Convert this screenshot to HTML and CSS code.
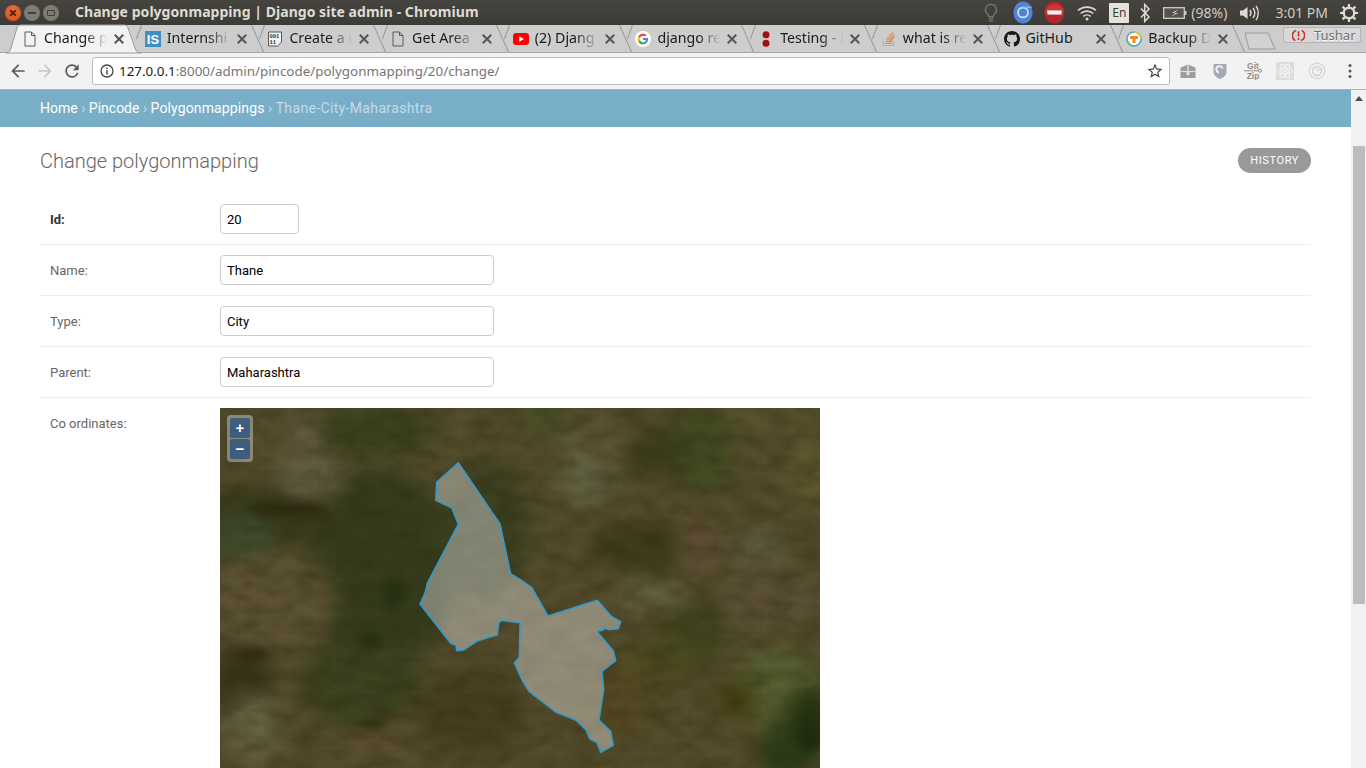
FILE: index.html
```html
<!DOCTYPE html>
<html lang="en">
<head>
<meta charset="utf-8">
<title>Change polygonmapping | Django site admin - Chromium</title>
<link rel="stylesheet" href="styles.css">
</head>
<body>
<div class="window">

  <header class="titlebar">
    <div class="winbtns">
      <span class="winbtn close-btn"></span>
      <span class="winbtn min-btn"></span>
      <span class="winbtn max-btn"></span>
    </div>
    <div class="wintitle">Change polygonmapping | Django site admin - Chromium</div>
    <div class="tray">
      <svg class="tray-bulb" viewBox="0 0 16 22"><path d="M8 1.5a6 6 0 0 0-3.5 10.9c.8.7 1 1.6 1 2.6h5c0-1 .2-1.9 1-2.6A6 6 0 0 0 8 1.5z" fill="none" stroke="#77766f" stroke-width="1.6"/><path d="M5.5 17h5M6 19.5h4" stroke="#77766f" stroke-width="1.6"/></svg>
      <svg class="tray-chrome" viewBox="0 0 20 24"><ellipse cx="10" cy="12" rx="10" ry="11.5" fill="#4d86d8"/><circle cx="10" cy="12" r="5.2" fill="none" stroke="#cfe0f5" stroke-width="1.8"/><path d="M10 6.5h9" stroke="#8fb4e8" stroke-width="1.5"/></svg>
      <svg class="tray-stop" viewBox="0 0 22 24"><ellipse cx="11" cy="12" rx="10.5" ry="11.5" fill="#b5272d"/><path d="M.8 12a10.500 11.500 0 0 1 20.400 0z" fill="#c9383a"/><rect x="3.500" y="9.800" width="15" height="4.400" fill="#f4eeee"/></svg>
      <svg class="tray-wifi" viewBox="0 0 20 16"><path d="M1 5.500c5-4.500 13-4.500 18 0M3.700 8.500c3.500-3.200 9.100-3.200 12.600 0M6.400 11.300c2-1.800 5.200-1.800 7.200 0" fill="none" stroke="#dedbd3" stroke-width="1.600"/><circle cx="10" cy="14" r="1.500" fill="#dedbd3"/></svg>
      <span class="tray-lang">En</span>
      <svg class="tray-bt" viewBox="0 0 12 20"><path d="M2 5.500l8 8.500-4.300 4.500V1.500L10 6l-8 8.500" fill="none" stroke="#dedbd3" stroke-width="1.500"/></svg>
      <svg class="tray-bat" viewBox="0 0 24 12"><rect x=".7" y=".7" width="20.600" height="10.600" fill="#55534d" stroke="#cfccc4" stroke-width="1.300"/><rect x="21.500" y="4" width="2" height="4" fill="#cfccc4"/><path d="M15 2.500L9 6h3.500L8 9.500 15 6h-3.500z" fill="#dedbd3"/></svg>
      <span class="tray-text tray-pct">(98%)</span>
      <svg class="tray-vol" viewBox="0 0 20 16"><path d="M1 5.500h3L8.500 2v12L4 10.500H1z" fill="#dedbd3"/><path d="M11 5c1.200 1.800 1.200 4.200 0 6M14 3c2.200 3 2.200 7 0 10M17 1c3 4 3 10 0 14" fill="none" stroke="#dedbd3" stroke-width="1.400"/></svg>
      <span class="tray-text tray-time">3:01 PM</span>
      <svg class="tray-gear" viewBox="0 0 18 18"><circle cx="9" cy="9" r="5.300" fill="none" stroke="#dedbd3" stroke-width="2.400"/><path d="M9 0v4M9 14v4M0 9h4M14 9h4M2.600 2.600l2.800 2.800M12.600 12.600l2.800 2.800M15.400 2.600l-2.800 2.800M5.400 12.600l-2.800 2.800" stroke="#dedbd3" stroke-width="2.200"/></svg>
    </div>
  </header>

  <nav class="tabstrip">
    <div class="tab active">
      <svg class="active-shape" viewBox="0 0 140 28"><path d="M1.500 28C4 28 5 26 6 23L12 3c.5-2 1.500-3 3.500-3h104c2 0 3 1 3.500 3l7 20c1 3 2.500 5 6 5z" fill="#f2f2f2" stroke="#9a9a9a"/></svg>
      <svg class="favicon" viewBox="0 0 16 16"><path d="M3 1h6.500L13 4.500V15H3z M9.500 1v3.500H13" fill="none" stroke="#5a5a5a" stroke-width="1"/></svg>
      <span class="tab-title">Change p</span><span class="close"></span>
    </div>
    <div class="tab">
      <svg class="favicon" viewBox="0 0 16 16"><rect width="16" height="16" fill="#3d8fc4"/><text x="8" y="13" class="fav-is">IS</text></svg>
      <span class="tab-title">Internshi</span><span class="close"></span>
    </div>
    <div class="tab">
      <svg class="favicon" viewBox="0 0 16 16"><path d="M1.500 1h13v10l-4 4h-9z" fill="#f4f4f4" stroke="#555"/><text x="2.500" y="6.500" class="fav-bin">001</text><text x="2.500" y="12.500" class="fav-bin">11</text></svg>
      <span class="tab-title">Create a r</span><span class="close"></span>
    </div>
    <div class="tab">
      <svg class="favicon" viewBox="0 0 16 16"><path d="M3 1h6.500L13 4.500V15H3z M9.500 1v3.500H13" fill="none" stroke="#5a5a5a" stroke-width="1"/></svg>
      <span class="tab-title">Get Area</span><span class="close"></span>
    </div>
    <div class="tab">
      <svg class="favicon" viewBox="0 0 16 16"><rect y="2" width="16" height="12" rx="3" fill="#f00"/><path d="M6.300 5.200v5.600L11 8z" fill="#fff"/></svg>
      <span class="tab-title">(2) Djang</span><span class="close"></span>
    </div>
    <div class="tab">
      <svg class="favicon" viewBox="0 0 48 48"><circle cx="24" cy="24" r="24" fill="#fff"/><g transform="translate(8 8) scale(.667)"><path fill="#EA4335" d="M24 9.500c3.540 0 6.710 1.220 9.210 3.600l6.850-6.850C35.900 2.380 30.470 0 24 0 14.620 0 6.510 5.380 2.560 13.220l7.980 6.190C12.430 13.720 17.740 9.500 24 9.500z"/><path fill="#4285F4" d="M46.980 24.550c0-1.570-.15-3.090-.38-4.550H24v9.020h12.940c-.58 2.960-2.260 5.480-4.780 7.180l7.730 6c4.510-4.180 7.090-10.360 7.090-17.650z"/><path fill="#FBBC05" d="M10.530 28.590c-.48-1.450-.76-2.990-.76-4.590s.27-3.140.76-4.590l-7.980-6.190C.92 16.460 0 20.120 0 24c0 3.880.92 7.540 2.560 10.780l7.970-6.190z"/><path fill="#34A853" d="M24 48c6.480 0 11.930-2.130 15.890-5.810l-7.730-6c-2.150 1.450-4.920 2.300-8.160 2.300-6.260 0-11.570-4.220-13.470-9.910l-7.980 6.190C6.510 42.620 14.620 48 24 48z"/></g></svg>
      <span class="tab-title">django re</span><span class="close"></span>
    </div>
    <div class="tab">
      <svg class="favicon" viewBox="0 0 16 16"><circle cx="8" cy="3.800" r="3.500" fill="#a50f12"/><circle cx="8" cy="12.200" r="3.500" fill="#a50f12"/></svg>
      <span class="tab-title">Testing - l</span><span class="close"></span>
    </div>
    <div class="tab">
      <svg class="favicon" viewBox="0 0 16 16"><path d="M2.500 10v4.500h10V10" fill="none" stroke="#b5b0a8" stroke-width="1.200"/><path d="M4.500 12.500h6M4.700 10.300l6 .6M5.300 8l5.800 1.600M6.500 5.500l5.200 3M8.500 3.200l4 4.400M11 1.500l2.400 5.300" stroke="#ef8236" stroke-width="1.200"/></svg>
      <span class="tab-title">what is re</span><span class="close"></span>
    </div>
    <div class="tab">
      <svg class="favicon" viewBox="0 0 16 16"><path fill="#161614" d="M8 0C3.580 0 0 3.580 0 8c0 3.540 2.290 6.530 5.470 7.590.4.070.55-.17.55-.38 0-.19-.01-.82-.01-1.490-2.010.37-2.530-.49-2.690-.94-.09-.23-.48-.94-.82-1.130-.28-.15-.68-.52-.01-.53.63-.01 1.080.58 1.230.82.720 1.210 1.870.87 2.330.66.070-.52.28-.87.51-1.070-1.780-.2-3.640-.89-3.640-3.950 0-.87.31-1.590.82-2.150-.08-.2-.36-1.020.08-2.120 0 0 .67-.21 2.200.82.64-.18 1.320-.27 2-.27.68 0 1.360.09 2 .27 1.530-1.040 2.200-.82 2.200-.82.44 1.100.16 1.920.08 2.120.51.56.82 1.270.82 2.150 0 3.070-1.870 3.750-3.650 3.950.29.25.54.73.54 1.480 0 1.070-.01 1.930-.01 2.200 0 .21.15.46.55.38A8.013 8.013 0 0 0 16 8c0-4.420-3.580-8-8-8z"/></svg>
      <span class="tab-title full">GitHub</span><span class="close"></span>
    </div>
    <div class="tab">
      <svg class="favicon" viewBox="0 0 16 16"><circle cx="8" cy="8" r="7" fill="#fff" stroke="#4aa8d8" stroke-width="1.600"/><path d="M8 1a7 7 0 0 1 7 7" fill="none" stroke="#e6c32e" stroke-width="1.600"/><path d="M1 8a7 7 0 0 0 7 7" fill="none" stroke="#62bb6a" stroke-width="1.600"/><path d="M4 5h8v3H9.500v4h-3V8H4z" fill="#ef8a2e"/></svg>
      <span class="tab-title">Backup D</span><span class="close"></span>
    </div>
    <svg class="newtab" viewBox="0 0 32 18"><path d="M1 1h23l7 16H5z" fill="#d2d2d2" stroke="#9a9a9a"/></svg>
    <div class="profile">
      <svg class="profile-icon" viewBox="0 0 14 14"><path d="M4.500 1.500a6 6 0 0 0-1 11M9.500 12.500a6 6 0 0 0 1-11" fill="none" stroke="#c9312b" stroke-width="1.700"/><path d="M7 2.500v5.500M7 9.800v2" stroke="#c9312b" stroke-width="1.700"/></svg>
      <span>Tushar</span>
    </div>
  </nav>

  <div class="toolbar">
    <svg class="nav-icon" viewBox="0 0 24 24"><path fill="#5a5a5a" d="M20 11H7.830l5.590-5.590L12 4l-8 8 8 8 1.410-1.410L7.830 13H20v-2z"/></svg>
    <svg class="nav-icon" viewBox="0 0 24 24"><path fill="#c8c8c8" d="M4 11h12.170l-5.590-5.590L12 4l8 8-8 8-1.410-1.410L16.170 13H4v-2z"/></svg>
    <svg class="nav-icon" viewBox="0 0 24 24"><path fill="#5a5a5a" d="M17.650 6.350A7.960 7.960 0 0 0 12 4c-4.420 0-7.990 3.580-7.990 8s3.570 8 7.990 8c3.730 0 6.840-2.550 7.730-6h-2.080A5.990 5.990 0 0 1 12 18c-3.310 0-6-2.690-6-6s2.690-6 6-6c1.660 0 3.140.69 4.220 1.780L13 11h7V4l-2.350 2.350z"/></svg>
    <div class="omnibox">
      <svg class="info" viewBox="0 0 14 14"><circle cx="7" cy="7" r="6" fill="none" stroke="#444" stroke-width="1.300"/><path d="M7 6v4.500M7 3.500v1.500" stroke="#444" stroke-width="1.400"/></svg>
      <span class="url"><span class="host">127.0.0.1</span>:8000/admin/pincode/polygonmapping/20/change/</span>
      <svg class="star" viewBox="0 0 24 24"><path fill="#444" d="M22 9.240l-7.190-.62L12 2 9.190 8.630 2 9.240l5.460 4.730L5.820 21 12 17.270 18.180 21l-1.630-7.030L22 9.240zM12 15.400l-3.760 2.270 1-4.280-3.320-2.880 4.380-.38L12 6.100l1.710 4.040 4.380.38-3.320 2.880 1 4.280L12 15.400z"/></svg>
    </div>
    <div class="exts">
      <svg class="ext" viewBox="0 0 18 18"><path d="M1.500 5.500L9 2.500l7.500 3V16h-15z" fill="#9c9c9c"/><path d="M1.500 9.500h15M9 2.500V13" stroke="#e4e4e4" stroke-width="1.200"/><path d="M6.500 10.500L9 14l2.500-3.500z" fill="#e4e4e4"/></svg>
      <svg class="ext" viewBox="0 0 18 18"><path d="M2.500 2h13v8c0 3-3 5.500-6.500 7-3.500-1.500-6.500-4-6.500-7z" fill="#a4a9b6"/><path d="M11.500 6.500A3.200 3.200 0 1 0 8 10.500" fill="none" stroke="#f2f2f2" stroke-width="1.800"/></svg>
      <svg class="ext ext-wide" viewBox="0 0 20 18"><text x="10" y="6.800" class="gz">Git</text><path d="M1 8.800h15" stroke="#8d8d8d"/><circle cx="17" cy="8.800" r="1.500" fill="none" stroke="#8d8d8d"/><text x="10" y="17" class="gz">Zip</text></svg>
      <svg class="ext" viewBox="0 0 18 18"><rect width="18" height="18" fill="#dcdcdc"/><g fill="none" stroke="#f4f4f4" stroke-width="1"><ellipse cx="9" cy="9" rx="7.500" ry="3"/><ellipse cx="9" cy="9" rx="7.500" ry="3" transform="rotate(60 9 9)"/><ellipse cx="9" cy="9" rx="7.500" ry="3" transform="rotate(120 9 9)"/></g><circle cx="9" cy="9" r="1.500" fill="#f4f4f4"/></svg>
      <svg class="ext" viewBox="0 0 18 18"><circle cx="9" cy="9" r="7.800" fill="none" stroke="#d8d8d8" stroke-width="1.400"/><circle cx="9" cy="9" r="4.500" fill="none" stroke="#d0d0d0" stroke-width="1.400"/><circle cx="10" cy="8" r="1.400" fill="#d8d8d8"/></svg>
      <svg class="ext ext-dots" viewBox="0 0 4 16"><circle cx="2" cy="2.500" r="1.500" fill="#555"/><circle cx="2" cy="8" r="1.500" fill="#555"/><circle cx="2" cy="13.500" r="1.500" fill="#555"/></svg>
    </div>
  </div>

  <div class="viewport">
    <main class="page">
      <div class="breadcrumbs"><a>Home</a> › <a>Pincode</a> › <a class="crumb-model">Polygonmappings</a> › <span class="crumb-last">Thane-City-Maharashtra</span></div>
      <div class="content">
        <div class="head">
          <h1>Change polygonmapping</h1>
          <a class="history">HISTORY</a>
        </div>
        <form>
          <div class="row">
            <label class="required" for="f-id">Id:</label>
            <input class="field short" id="f-id" type="text" value="20">
          </div>
          <div class="row">
            <label for="f-name">Name:</label>
            <input class="field" id="f-name" type="text" value="Thane">
          </div>
          <div class="row">
            <label for="f-type">Type:</label>
            <input class="field" id="f-type" type="text" value="City">
          </div>
          <div class="row">
            <label for="f-parent">Parent:</label>
            <input class="field" id="f-parent" type="text" value="Maharashtra">
          </div>
          <div class="row row-map">
            <label>Co ordinates:</label>
            <div class="map">
              <svg class="map-svg" viewBox="0 0 600 400">
                <defs>
                  <filter id="soft" x="-10%" y="-10%" width="120%" height="120%" color-interpolation-filters="sRGB"><feGaussianBlur stdDeviation="10"/></filter>
                  <filter id="softer" x="-10%" y="-10%" width="120%" height="120%" color-interpolation-filters="sRGB"><feGaussianBlur stdDeviation="5"/></filter>
                  <filter id="noise" color-interpolation-filters="sRGB"><feTurbulence type="fractalNoise" baseFrequency=".04 .08" numOctaves="3" seed="7"/><feColorMatrix values="0 0 0 0 .17  0 0 0 0 .16  0 0 0 0 .05  1.800 0 0 0 -.6"/><feGaussianBlur stdDeviation="1.500"/></filter>
                  <pattern id="grid" width="9" height="7" patternUnits="userSpaceOnUse"><path d="M0 0h9M0 0v7" stroke="#000" stroke-opacity=".035" stroke-width="1"/></pattern>
                </defs>
                <rect width="600" height="400" fill="#554d2d"/>
                <g filter="url(#soft)">
                  <ellipse cx="150" cy="22" rx="65" ry="24" fill="#39421e"/>
                  <ellipse cx="160" cy="160" rx="75" ry="100" fill="#353d1e"/>
                  <ellipse cx="140" cy="275" rx="60" ry="45" fill="#3b4320"/>
                  <ellipse cx="50" cy="105" rx="70" ry="30" fill="#38391a"/>
                  <ellipse cx="23" cy="125" rx="30" ry="28" fill="#3d4a2d"/>
                  <ellipse cx="57" cy="192" rx="60" ry="50" fill="#5e5334"/>
                  <ellipse cx="83" cy="35" rx="22" ry="30" fill="#635a3e"/>
                  <ellipse cx="87" cy="72" rx="36" ry="20" fill="#646046"/>
                  <ellipse cx="20" cy="275" rx="32" ry="32" fill="#39351b"/>
                  <ellipse cx="33" cy="320" rx="30" ry="34" fill="#666242"/>
                  <ellipse cx="163" cy="335" rx="40" ry="22" fill="#5c5030"/>
                  <ellipse cx="250" cy="305" rx="55" ry="45" fill="#47401f"/>
                  <ellipse cx="265" cy="120" rx="45" ry="70" fill="#3d4221"/>
                  <ellipse cx="367" cy="60" rx="30" ry="40" fill="#626242"/>
                  <ellipse cx="380" cy="32" rx="25" ry="20" fill="#5f5436"/>
                  <ellipse cx="323" cy="10" rx="30" ry="14" fill="#465027"/>
                  <ellipse cx="480" cy="42" rx="34" ry="42" fill="#414b22"/>
                  <ellipse cx="435" cy="45" rx="26" ry="28" fill="#3e3e1b"/>
                  <ellipse cx="423" cy="139" rx="55" ry="26" fill="#3f3d1a"/>
                  <ellipse cx="430" cy="186" rx="34" ry="15" fill="#666340"/>
                  <ellipse cx="480" cy="139" rx="24" ry="30" fill="#5f4d35"/>
                  <ellipse cx="540" cy="142" rx="26" ry="20" fill="#5e5a40"/>
                  <ellipse cx="550" cy="192" rx="50" ry="28" fill="#5d5137"/>
                  <ellipse cx="557" cy="280" rx="42" ry="40" fill="#566032"/>
                  <ellipse cx="517" cy="290" rx="20" ry="18" fill="#46420f"/>
                  <ellipse cx="590" cy="312" rx="26" ry="30" fill="#24330f"/>
                  <ellipse cx="567" cy="345" rx="30" ry="28" fill="#2b3d18"/>
                  <ellipse cx="590" cy="65" rx="22" ry="30" fill="#5f592e"/>
                  <ellipse cx="557" cy="12" rx="50" ry="18" fill="#5a5430"/>
                  <ellipse cx="473" cy="225" rx="35" ry="28" fill="#41461f"/>
                  <ellipse cx="440" cy="255" rx="32" ry="26" fill="#4d4a20"/>
                  <ellipse cx="395" cy="295" rx="40" ry="40" fill="#574a25"/>
                </g>
                <g filter="url(#softer)">
                  <ellipse cx="67" cy="101" rx="40" ry="6" fill="#2b2710"/>
                  <ellipse cx="173" cy="185" rx="12" ry="14" fill="#283214"/>
                  <ellipse cx="150" cy="232" rx="12" ry="10" fill="#283212"/>
                  <ellipse cx="33" cy="247" rx="18" ry="7" fill="#2e2b12"/>
                  <ellipse cx="153" cy="316" rx="14" ry="5" fill="#302e12"/>
                  <ellipse cx="590" cy="330" rx="14" ry="14" fill="#1e2d10"/>
                </g>
                <rect width="600" height="400" filter="url(#noise)" opacity=".45"/>
                <rect width="600" height="400" fill="url(#grid)"/>
                <polygon class="shape" points="238.300,54.700 280,116 290.700,166 300,171.300 311.700,179.300 328,208 377.300,192.300 391.700,208.700 400.700,213.700 398.300,220.700 388.300,221.700 386,220.300 380.700,222.700 377.700,222 378.300,225 393.300,242.700 395.700,252.700 382,263.300 383.700,282 379,312 390.700,323.300 393.300,337.300 380.700,344.300 376.700,334.300 370,331.300 366,322 355.700,312 335.700,304 309,283.300 301.700,271.300 294.300,254.700 299.300,249.300 300,216 300,214.700 281.700,212.300 279,214.700 277.300,226.700 257.700,232.700 244,242 236.700,242.700 236,237.300 230.700,235.300 200,196 205,185.300 207.300,175.300 238.300,116.300 231.700,99.700 215.700,92.300 216.700,74.300"/>
              </svg>
              <div class="zoombox">
                <button type="button" class="zoombtn">+</button>
                <button type="button" class="zoombtn">−</button>
              </div>
            </div>
          </div>
        </form>
      </div>
    </main>
    <aside class="scrollbar">
      <span class="arrow"></span>
      <span class="thumb"></span>
    </aside>
  </div>
</div>
</body>
</html>
```
FILE: styles.css
```css
* { box-sizing: border-box; }
html, body { margin: 0; height: 100%; overflow: hidden; }
body { background: #fff; font-family: Roboto, sans-serif; }

.window { width: 1366px; height: 768px; display: flex; flex-direction: column; overflow: hidden; }

/* Title bar */
.titlebar {
  height: 25px; flex: none; display: flex; align-items: center;
  background: linear-gradient(#45443f, #3c3b37);
  color: #dfdbd2;
  font-family: "Noto Sans", sans-serif;
}
.winbtns { display: flex; gap: 3px; padding-left: 5px; width: 75px; }
.winbtn { width: 16px; height: 16px; border-radius: 50%; position: relative; }
.close-btn { background: radial-gradient(circle at 50% 40%, #f0743c, #d2481d); }
.close-btn::before { content: ""; position: absolute; left: 4px; right: 4px; top: 7px; height: 2px; background: #5a2410; transform: rotate(45deg); }
.close-btn::after { content: ""; position: absolute; left: 4px; right: 4px; top: 7px; height: 2px; background: #5a2410; transform: rotate(-45deg); }
.min-btn, .max-btn { background: #7d7b73; }
.min-btn::before { content: ""; position: absolute; left: 4px; right: 4px; top: 7px; height: 2px; background: #3f3e39; }
.max-btn::before { content: ""; position: absolute; left: 4px; right: 4px; top: 5px; bottom: 5px; border: 1px solid #3f3e39; border-radius: 1px; }
.wintitle { font-size: 14px; font-weight: 700; white-space: nowrap; letter-spacing: .04px; padding-bottom: 2px; }

.tray { margin-left: auto; display: flex; align-items: center; gap: 12px; padding-right: 8px; }
.tray svg { display: block; flex: none; }
.tray-bulb { width: 16px; height: 20px; }
.tray-chrome { width: 20px; height: 23px; margin-left: 2px; }
.tray-stop { width: 21px; height: 23px; margin-left: -1px; }
.tray-wifi { width: 20px; height: 16px; }
.tray-lang { width: 20px; height: 20px; background: #e6e2da; color: #3c3b37; font-size: 12px; line-height: 20px; text-align: center; border-radius: 1px; }
.tray-bt { width: 12px; height: 20px; margin-left: -2px; }
.tray-bat { width: 24px; height: 12px; }
.tray-text { font-size: 14px; color: #cfccc4; white-space: nowrap; padding-bottom: 1px; }
.tray-pct { margin-left: -8px; }
.tray-vol { width: 20px; height: 16px; }
.tray-time { margin-left: 4px; }
.tray-gear { width: 18px; height: 18px; }

/* Tabs */
.tabstrip {
  height: 28px; flex: none; display: flex; align-items: flex-start; padding-left: 5px;
  background: #cdcdcd; border-bottom: 1px solid #a4a4a4;
  font-family: "Noto Sans", sans-serif;
}
.tab {
  position: relative; flex: none; width: 122.7px; height: 27px;
  display: flex; align-items: center; padding-left: 17px; color: #1a1a1a; font-size: 14.2px;
}
.tab::after {
  content: ""; position: absolute; left: 123px; top: 0; width: 1px; height: 27px;
  background: #949494; transform-origin: top; transform: skewX(24deg);
}
.tab::before {
  content: ""; position: absolute; left: 13.5px; top: 0; width: 1px; height: 14px;
  background: #949494; transform-origin: top; transform: skewX(-20deg);
}
.tab.active::before, .tab.active::after { display: none; }
.tab.active { z-index: 2; }
.active-shape { position: absolute; left: 0; top: 0; width: 140px; height: 28px; overflow: visible; }
.favicon { width: 16px; height: 16px; flex: none; position: relative; display: block; }
.tab-title {
  position: relative; width: 66px; margin-left: 6px; padding-bottom: 2px; overflow: hidden; white-space: nowrap;
  -webkit-mask-image: linear-gradient(to right, #000 62%, transparent 96%);
  mask-image: linear-gradient(to right, #000 62%, transparent 96%);
}
.tab-title.full { -webkit-mask-image: none; mask-image: none; }
.close { position: relative; width: 10px; height: 10px; margin-left: 4px; flex: none; }
.close::before, .close::after {
  content: ""; position: absolute; left: -1px; right: -1px; top: 4px; height: 2px; background: #555;
}
.close::before { transform: rotate(45deg); }
.close::after { transform: rotate(-45deg); }
.fav-is { font: 700 13px "Liberation Sans", sans-serif; fill: #fff; text-anchor: middle; }
.fav-bin { font: 700 5.5px "Liberation Mono", monospace; fill: #333; }
.newtab { width: 32px; height: 18px; flex: none; margin: 7px 0 0 12px; display: block; }
.profile {
  margin: 2px 5px 0 auto; width: 78px; height: 16px; display: flex; align-items: center; gap: 9px; padding-left: 8px;
  background: #d8d8d8; border: 1px solid #b4b4b4; border-radius: 2px;
  font-size: 13px; color: #6e6e6e; text-shadow: 0 1px 0 #fff;
}
.profile-icon { width: 13px; height: 13px; flex: none; }

/* Toolbar */
.toolbar {
  height: 37px; flex: none; display: flex; align-items: center; background: #f2f2f2;
  border-bottom: 1px solid #b0b0b0; padding-left: 8px;
}
.nav-icon { width: 20px; height: 20px; flex: none; margin-right: 7px; display: block; }
.omnibox {
  width: 1078px; height: 28px; margin-left: 3px; flex: none; display: flex; align-items: center;
  background: #fff; border: 1px solid #bdbdbd; border-radius: 3px; padding: 0 5px 0 7px;
}
.info { width: 14px; height: 14px; flex: none; }
.url { margin-left: 5px; font-family: "Noto Sans", sans-serif; font-size: 13.4px; color: #747474; white-space: nowrap; padding-bottom: 1px; }
.host { color: #1a1a1a; }
.star { width: 18px; height: 18px; margin-left: auto; flex: none; }
.exts { display: flex; align-items: center; gap: 14px; margin-left: 9px; }
.ext { width: 18px; height: 18px; flex: none; display: block; }
.ext-wide { width: 20px; margin: 0 -1px 0 0; }
.ext-dots { width: 4px; height: 16px; margin-left: 8px; }
.gz { font: 700 8.500px "Liberation Sans", sans-serif; fill: #8d8d8d; text-anchor: middle; }

/* Page */
.viewport { flex: 1; min-height: 0; display: flex; }
.page { flex: 1; min-width: 0; overflow: hidden; }
.breadcrumbs {
  height: 37px; padding: 0 40px; background: #79aec8; color: #c4dce8;
  font-size: 14px; line-height: 36px; white-space: nowrap;
}
.breadcrumbs a { color: #fff; }
.crumb-model { letter-spacing: .12px; }
.crumb-last { color: #c4dce8; letter-spacing: .35px; }
.content { padding: 20px 40px 0; }
.head { display: flex; justify-content: space-between; align-items: flex-start; height: 47px; }
h1 { margin: 0; font-size: 20px; font-weight: 300; color: #666; line-height: 28px; }
.history {
  height: 25px; margin: 1px 0 0; padding: 0 12px; border-radius: 15px; background: #999;
  color: #fff; font-size: 11px; letter-spacing: .6px; line-height: 25px;
}
.row { display: flex; padding: 10px; border-bottom: 1px solid #eee; }
.row-map { border-bottom: 0; }
label { width: 170px; flex: none; font-size: 13px; color: #666; padding-top: 9px; line-height: 14px; }
label.required { color: #333; font-weight: 700; }
.field {
  width: 274px; height: 30px; padding: 5px 6px; border: 1px solid #ccc; border-radius: 4px;
  font: 13px Roboto, sans-serif; color: #000; background: #fff; outline: 0; display: block;
}
.field.short { width: 79px; }
.map { position: relative; width: 600px; height: 400px; flex: none; }
.map-svg { display: block; width: 600px; height: 400px; }
.shape { fill: #eee; fill-opacity: .4; stroke: #2f9bd0; stroke-width: 1.500; stroke-linejoin: round; }
.zoombox {
  position: absolute; left: 7px; top: 7px; width: 26px; padding: 3px; display: flex; flex-direction: column; gap: 1px;
  background: rgba(255,255,255,.35); border-radius: 4px;
}
.zoombtn {
  width: 20px; height: 20px; padding: 0; border: 0; border-radius: 2px;
  background: rgba(0,60,136,.55); color: #fff; font: 700 15px/18px "Liberation Sans", sans-serif;
}

/* Scrollbar */
.scrollbar { width: 15px; flex: none; background: #f1f1f1; display: flex; flex-direction: column; align-items: center; }
.arrow { width: 0; height: 0; margin-top: 6px; border: 4px solid transparent; border-top: 0; border-bottom: 5px solid #505050; }
.thumb { width: 12px; height: 458px; margin-top: 45px; background: #bdbdbd; }
```
